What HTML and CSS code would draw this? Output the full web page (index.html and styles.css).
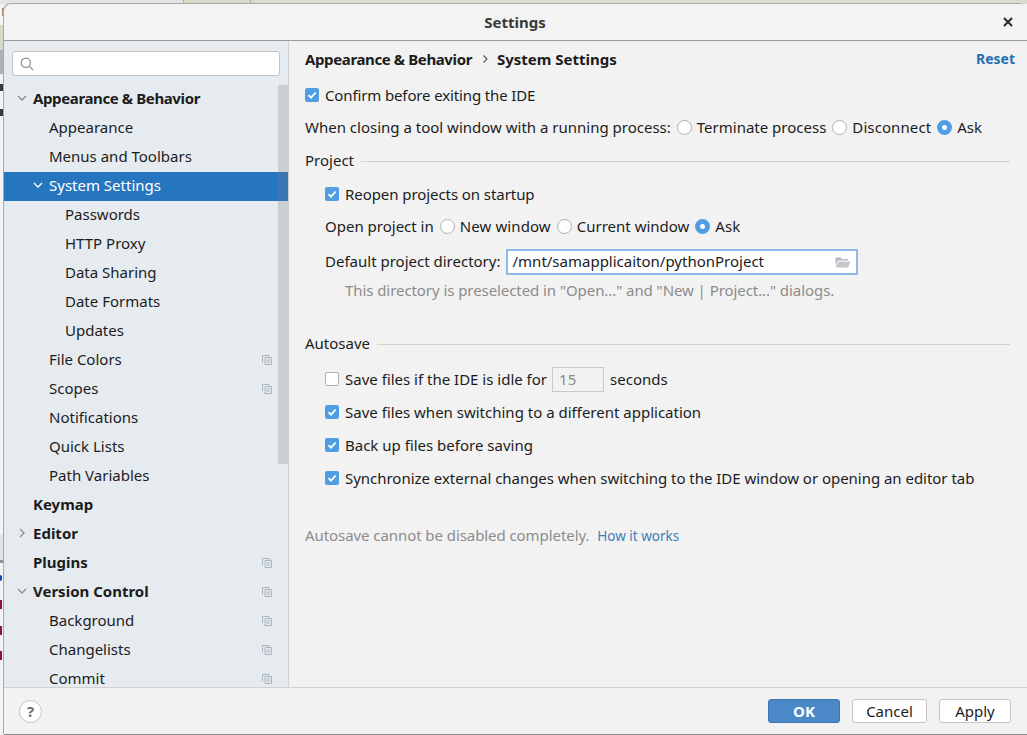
FILE: index.html
```html
<!DOCTYPE html>
<html lang="en">
<head>
    <meta charset="UTF-8">
    <title>Settings</title>
    <link rel="stylesheet" href="styles.css">
</head>
<body>
    <!-- bits of the desktop behind the dialog -->
    <div class="backdrop">
        <span class="bd-top-gray"></span>
        <span class="bd-top-tab"></span>
        <span class="bd-top-rest"></span>
        <span class="bd-beige"></span>
        <span class="bd-brown"></span>
        <span class="bd-gray"></span>
        <span class="bd-letter bd-s"></span>
        <span class="bd-letter bd-c"></span>
        <span class="bd-panel"></span>
        <span class="bd-bar"></span>
        <span class="bd-mark bd-blue"></span>
        <span class="bd-mark bd-red1"></span>
        <span class="bd-mark bd-red2"></span>
        <span class="bd-mark bd-red3"></span>
    </div>

    <div class="dialog">
        <header class="titlebar">
            <span class="title">Settings</span>
            <svg class="close" width="10" height="10" viewBox="0 0 10 10"><path d="M1 1l8 8M9 1l-8 8" stroke="#2b2b2b" stroke-width="2"/></svg>
        </header>

        <div class="main">
            <aside class="sidebar">
                <div class="search">
                    <svg width="14" height="14" viewBox="0 0 14 14" fill="none" stroke="#8c8c8c" stroke-width="1.2"><circle cx="5.8" cy="5.8" r="4.6"/><path d="M9.2 9.2l3.8 3.8"/></svg>
                </div>
                <div class="tree">
                    <div class="scrollbar"></div>
                    <div class="row lvl0 bold"><svg class="arrow" width="10" height="10" viewBox="0 0 10 10"><path d="M1 3l4 4 4-4" fill="none" stroke="#8c8c8c" stroke-width="1.3"/></svg><span class="tight">Appearance &amp; Behavior</span></div>
                    <div class="row lvl1">Appearance</div>
                    <div class="row lvl1">Menus and Toolbars</div>
                    <div class="row lvl1 selected"><svg class="arrow" width="10" height="10" viewBox="0 0 10 10"><path d="M1 3l4 4 4-4" fill="none" stroke="#fff" stroke-width="1.3"/></svg>System Settings</div>
                    <div class="row lvl2">Passwords</div>
                    <div class="row lvl2">HTTP Proxy</div>
                    <div class="row lvl2">Data Sharing</div>
                    <div class="row lvl2">Date Formats</div>
                    <div class="row lvl2">Updates</div>
                    <div class="row lvl1">File Colors<svg class="copy" width="10" height="10" viewBox="0 0 10 10"><use href="#copy-icon"/></svg></div>
                    <div class="row lvl1">Scopes<svg class="copy" width="10" height="10" viewBox="0 0 10 10"><use href="#copy-icon"/></svg></div>
                    <div class="row lvl1">Notifications</div>
                    <div class="row lvl1">Quick Lists</div>
                    <div class="row lvl1">Path Variables</div>
                    <div class="row lvl0 bold">Keymap</div>
                    <div class="row lvl0 bold"><svg class="arrow" width="10" height="10" viewBox="0 0 10 10"><path d="M3 1l4 4-4 4" fill="none" stroke="#8c8c8c" stroke-width="1.3"/></svg>Editor</div>
                    <div class="row lvl0 bold">Plugins<svg class="copy" width="10" height="10" viewBox="0 0 10 10"><use href="#copy-icon"/></svg></div>
                    <div class="row lvl0 bold"><svg class="arrow" width="10" height="10" viewBox="0 0 10 10"><path d="M1 3l4 4 4-4" fill="none" stroke="#8c8c8c" stroke-width="1.3"/></svg>Version Control<svg class="copy" width="10" height="10" viewBox="0 0 10 10"><use href="#copy-icon"/></svg></div>
                    <div class="row lvl1">Background<svg class="copy" width="10" height="10" viewBox="0 0 10 10"><use href="#copy-icon"/></svg></div>
                    <div class="row lvl1">Changelists<svg class="copy" width="10" height="10" viewBox="0 0 10 10"><use href="#copy-icon"/></svg></div>
                    <div class="row lvl1">Commit<svg class="copy" width="10" height="10" viewBox="0 0 10 10"><use href="#copy-icon"/></svg></div>
                </div>
            </aside>

            <section class="content">
                <div class="crumbs">
                    <span class="bold tight">Appearance &amp; Behavior</span>
                    <svg class="crumb-sep" width="6" height="8" viewBox="0 0 6 8"><path d="M1.5 0.5l3.5 3.5-3.5 3.5" fill="none" stroke="#555" stroke-width="1.1"/></svg>
                    <span class="bold">System Settings</span>
                    <a class="reset">Reset</a>
                </div>

                <div class="line first"><span class="check on"><svg width="14" height="14" viewBox="0 0 14 14"><use href="#tick"/></svg></span><span class="snug-more">Confirm before exiting the IDE</span></div>
                <div class="line tool-window">
                    <span>When closing a tool window with a running process:</span>
                    <span class="radio"></span><span>Terminate process</span>
                    <span class="radio"></span><span class="wide">Disconnect</span>
                    <span class="radio on"></span><span>Ask</span>
                </div>

                <div class="group project"><span>Project</span><i></i></div>
                <div class="line sub reopen"><span class="check on"><svg width="14" height="14" viewBox="0 0 14 14"><use href="#tick"/></svg></span><span class="snug">Reopen projects on startup</span></div>
                <div class="line sub open-in">
                    <span>Open project in</span>
                    <span class="radio"></span><span class="wide">New window</span>
                    <span class="radio"></span><span>Current window</span>
                    <span class="radio on"></span><span>Ask</span>
                </div>
                <div class="line sub directory">
                    <span>Default project directory:</span>
                    <div class="path-field">
                        <span>/mnt/samapplicaiton/pythonProject</span>
                        <svg width="16" height="12" viewBox="0 0 16 12"><path d="M0.5 1.5h5l1.5 1.5h6v1.500h-10l-2.500 5z" fill="#b4b9be"/><path d="M3.500 5.500h12l-2.500 6h-12.500z" fill="#c3c7cb"/></svg>
                    </div>
                </div>
                <div class="hint snug">This directory is preselected in "Open..." and "New | Project..." dialogs.</div>

                <div class="group autosave"><span>Autosave</span><i></i></div>
                <div class="line sub idle"><span class="check"></span><span>Save files if the IDE is idle for</span><span class="number">15</span><span>seconds</span></div>
                <div class="line sub option"><span class="check on"><svg width="14" height="14" viewBox="0 0 14 14"><use href="#tick"/></svg></span><span>Save files when switching to a different application</span></div>
                <div class="line sub option"><span class="check on"><svg width="14" height="14" viewBox="0 0 14 14"><use href="#tick"/></svg></span><span>Back up files before saving</span></div>
                <div class="line sub option"><span class="check on"><svg width="14" height="14" viewBox="0 0 14 14"><use href="#tick"/></svg></span><span class="snug-less">Synchronize external changes when switching to the IDE window or opening an editor tab</span></div>

                <div class="note"><span class="snug">Autosave cannot be disabled completely.</span> <a>How it works</a></div>
            </section>
        </div>

        <footer class="buttons">
            <span class="help">?</span>
            <span class="btn primary">OK</span>
            <span class="btn cancel">Cancel</span>
            <span class="btn">Apply</span>
        </footer>
    </div>

    <svg class="defs" width="0" height="0">
        <symbol id="copy-icon" viewBox="0 0 10 10">
            <path d="M0.500 7.500v-7h6.500v2M3 2.500h6.500v7h-6.500zM4.500 5h3.500M4.500 7h3.500" fill="none" stroke="#a9b4bd" stroke-width="1"/>
        </symbol>
        <symbol id="tick" viewBox="0 0 14 14">
            <path d="M3.500 7.200l2.500 2.500 4.700-5.200" fill="none" stroke="#fff" stroke-width="1.800"/>
        </symbol>
    </svg>
</body>
</html>
```

FILE: styles.css
```css
html, body {
    margin: 0;
    height: 100%;
}

body {
    background-color: #f4f4f4;
    color: #1c1c1c;
    font-family: "Noto Sans", sans-serif;
    font-size: 15px;
    line-height: 20px;
    overflow: hidden;
    padding: 4px 0 0 4px;
    box-sizing: border-box;
}

.bold {
    font-weight: bold;
}

.tight {
    letter-spacing: -0.38px;
}

.snug {
    letter-spacing: -0.07px;
}

.snug-more {
    letter-spacing: -0.13px;
}

.snug-less {
    letter-spacing: -0.03px;
}

.wide {
    letter-spacing: 0.1px;
}

.defs {
    position: absolute;
}

/* desktop behind the dialog */
.backdrop span {
    position: absolute;
}

.bd-top-gray {
    left: 0;
    top: 0;
    width: 183px;
    height: 4px;
    background-color: #e4e4e4;
}

.bd-top-tab {
    left: 183px;
    top: 0;
    width: 68px;
    height: 4px;
    background-color: #d8d8c6;
    border-left: 1px solid #a9a99c;
    border-right: 1px solid #a9a99c;
    box-sizing: border-box;
}

.bd-top-rest {
    left: 251px;
    top: 0;
    right: 0;
    height: 4px;
    background-color: #dcdcce;
}

.bd-beige {
    left: 0;
    top: 25px;
    width: 4px;
    height: 25px;
    background-color: #d8d8c6;
}

.bd-brown {
    left: 2px;
    top: 8px;
    width: 2px;
    height: 8px;
    background-color: #a08a78;
}

.bd-gray {
    left: 0;
    top: 50px;
    width: 4px;
    height: 24px;
    background-color: #b2b2b2;
}

.bd-letter {
    left: 0;
    width: 3px;
    background-color: #3a3a3a;
}

.bd-s {
    top: 84px;
    height: 7px;
}

.bd-c {
    top: 109px;
    height: 7px;
}

.bd-panel {
    left: 0;
    top: 535px;
    width: 4px;
    height: 25px;
    background-color: #e2e2e2;
}

.bd-bar {
    left: 0;
    top: 560px;
    width: 4px;
    height: 3px;
    background-color: #8f8f9c;
}

.bd-mark {
    left: 0;
    width: 2px;
}

.bd-blue {
    top: 575px;
    height: 6px;
    background-color: #1a3fc0;
    border-radius: 0 3px 3px 0;
}

.bd-red1 {
    top: 600px;
    height: 9px;
    background-color: #8c1040;
}

.bd-red2 {
    top: 626px;
    height: 9px;
    background-color: #8c1040;
}

.bd-red3 {
    top: 651px;
    height: 9px;
    background-color: #8c1040;
}

/* dialog */
.dialog {
    position: relative;
    display: flex;
    flex-direction: column;
    height: 731px;
    background-color: #f2f2f2;
    border-radius: 8px 8px 0 0;
    border-bottom: 1px solid #8d8d8d;
    box-sizing: border-box;
    box-shadow: -1px -1px 0 #a8a8a8;
}

.titlebar {
    flex: none;
    display: flex;
    align-items: center;
    justify-content: center;
    height: 37px;
    background-color: #f3f3f3;
    border-bottom: 1px solid #9a9a9a;
    box-sizing: border-box;
    border-radius: 8px 8px 0 0;
    position: relative;
}

.title {
    font-weight: bold;
    color: #3a3a3a;
    margin-left: -1px;
}

.close {
    position: absolute;
    right: 14px;
    top: 13px;
}

.main {
    flex: 1;
    display: flex;
    min-height: 0;
}

.sidebar {
    flex: none;
    width: 285px;
    background-color: #e6ebf0;
    border-right: 1px solid #d1d1d1;
    box-sizing: border-box;
    display: flex;
    flex-direction: column;
    min-height: 0;
}

.search {
    flex: none;
    display: flex;
    align-items: center;
    margin: 10px 0 9px 8px;
    width: 268px;
    height: 25px;
    padding-left: 7px;
    background-color: #fff;
    border: 1px solid #c4c4c4;
    border-radius: 3px;
    box-sizing: border-box;
}

.tree {
    position: relative;
    flex: 1;
    min-height: 0;
    overflow: hidden;
}

.scrollbar {
    position: absolute;
    right: 0;
    top: 0;
    width: 10px;
    height: 379px;
    background-color: rgba(120, 125, 135, 0.25);
    z-index: 1;
}

.row {
    position: relative;
    display: flex;
    align-items: center;
    height: 29px;
    padding-bottom: 3px;
    box-sizing: border-box;
}

.lvl0 {
    padding-left: 29px;
}

.lvl1 {
    padding-left: 45px;
}

.lvl2 {
    padding-left: 61px;
}

.selected {
    background-color: #2675bf;
    color: #fff;
}

.arrow {
    position: absolute;
    top: 8px;
    left: 13px;
}

.selected .arrow {
    left: 29px;
}

.copy {
    position: absolute;
    right: 16px;
    top: 9px;
}

/* right side */
.content {
    flex: 1;
    min-width: 0;
    padding: 0 17px 0 16px;
}

.crumbs {
    display: flex;
    align-items: center;
    height: 20px;
    margin-top: 8px;
    margin-right: -5px;
}

.crumb-sep {
    margin: 0 9px 0 10px;
}

.reset {
    margin-left: auto;
    color: #2470b3;
    font-weight: bold;
    font-size: 14px;
}

.line {
    display: flex;
    align-items: center;
    height: 20px;
    white-space: nowrap;
}

.first {
    margin-top: 16px;
}

.tool-window {
    margin-top: 12px;
}

.sub {
    padding-left: 20px;
}

.check {
    flex: none;
    width: 14px;
    height: 14px;
    margin: 0 6px 0 0;
    background-color: #fff;
    border: 1px solid #b0b0b0;
    border-radius: 2px;
    box-sizing: border-box;
}

.check.on {
    background-color: #4f9ee3;
    border: none;
}

.check svg {
    display: block;
}

.radio {
    flex: none;
    box-sizing: border-box;
    width: 15px;
    height: 15px;
    margin: 0 5px 0 6px;
    background-color: #fff;
    border: 1px solid #b0b0b0;
    border-radius: 50%;
}

.radio.on {
    background-color: #fff;
    border: 5px solid #4f9ee3;
}

.group {
    display: flex;
    align-items: center;
    height: 20px;
}

.group i {
    flex: 1;
    height: 1px;
    margin-top: 2px;
    margin-left: 7px;
    background-color: #d1d1d1;
}

.project {
    margin-top: 13px;
}

.reopen {
    margin-top: 14px;
}

.open-in {
    margin-top: 12px;
}

.directory {
    margin-top: 13px;
    height: 26px;
}

.directory > span,
.path-field span {
    margin-bottom: 2px;
}

.path-field {
    display: flex;
    align-items: center;
    justify-content: space-between;
    width: 352px;
    height: 26px;
    margin-left: 5px;
    padding: 0 5px 0 5px;
    background-color: #fff;
    border: 2px solid #8fbbe8;
    box-sizing: border-box;
}

.hint {
    margin-top: 5px;
    margin-left: 40px;
    height: 20px;
    color: #8c8c8c;
}

.autosave {
    margin-top: 33px;
}

.idle {
    margin-top: 16px;
}

.number {
    width: 52px;
    height: 25px;
    line-height: 23px;
    margin: 0 6px 0 5px;
    padding-left: 6px;
    color: #8c8c8c;
    border: 1px solid #c9c9c9;
    box-sizing: border-box;
}

.option {
    margin-top: 13px;
}

.note {
    margin-top: 37px;
    color: #8c8c8c;
}

.note a {
    color: #3d7fb8;
    font-size: 13.5px;
    margin-left: 4px;
}

/* bottom buttons */
.buttons {
    flex: none;
    display: flex;
    align-items: center;
    justify-content: flex-end;
    gap: 12px;
    height: 47px;
    padding: 0 16px 0 15px;
    background-color: #f2f2f2;
    border-top: 1px solid #d1d1d1;
    box-sizing: border-box;
}

.help {
    margin-right: auto;
    width: 23px;
    height: 23px;
    line-height: 21px;
    text-align: center;
    font-weight: bold;
    color: #6e6e6e;
    background-color: #fff;
    border: 1px solid #c4c4c4;
    border-radius: 50%;
    box-sizing: border-box;
}

.btn {
    width: 72px;
    height: 24px;
    line-height: 22px;
    text-align: center;
    background-color: #fff;
    border: 1px solid #c4c4c4;
    border-radius: 3px;
    box-sizing: border-box;
}

.btn.cancel {
    width: 75px;
}

.btn.primary {
    background-color: #4a88c7;
    border-color: #3d78b3;
    color: #fff;
    font-weight: bold;
}
```
